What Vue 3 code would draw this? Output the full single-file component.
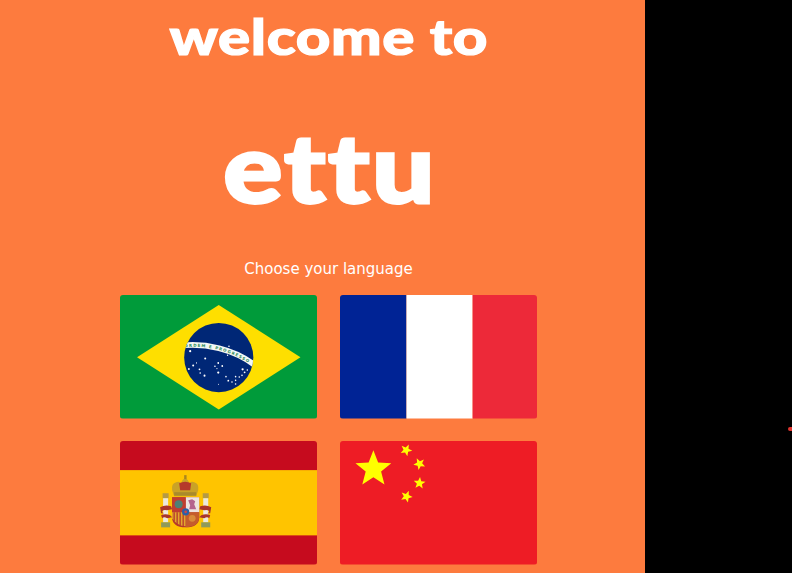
<script setup>
function star(cx, cy, r, rotDeg = 0) {
  const pts = []
  for (let i = 0; i < 10; i++) {
    const rad = i % 2 === 0 ? r : r * 0.43
    const a = ((rotDeg - 90 + i * 36) * Math.PI) / 180
    pts.push(`${(cx + rad * Math.cos(a)).toFixed(2)},${(cy + rad * Math.sin(a)).toFixed(2)}`)
  }
  return pts.join(' ')
}
const brStars = [
  [70,56,1.1],[85,63.3,1],[73,70.3,1],[68.7,73.7,.9],[79.3,74,.9],[80,77.7,.8],[84.3,80.3,1],[76.3,67.7,.6],
  [98,67.7,.9],[94.7,71,.8],[102,70.7,.9],[98,77.3,1.1],[96.7,73.3,.6],[108.7,51,.8],[107.3,60,.7],[105.7,81.3,.8],
  [108,85.3,.9],[111.7,86.7,.8],[115.3,81.3,.8],[115.3,85,.8],[115.3,88.7,.8],[119,81.7,.8],[121.7,80,.8],
  [122.3,74,1.1],[127,74.7,.8],[124.3,77,.9],[98.3,89,.5]
]
const cnBig = star(33.3, 28, 18.8)
const cnSmall = [
  star(66, 9, 6.2, 25),
  star(79.3, 22.7, 6.2, 45),
  star(79.3, 42, 6.2, 5),
  star(66.3, 55.3, 6.2, 22)
]
</script>

<template>
  <div class="screen">
    <main class="panel">
      <h1 class="welcome">welcome to</h1>
      <div class="logo">ettu</div>
      <p class="choose">Choose your language</p>
      <div class="flags">
        <svg class="flag" viewBox="0 0 197 123" preserveAspectRatio="none" aria-label="Português">
          <defs>
            <clipPath id="globe"><circle cx="98.5" cy="62.3" r="34.5" /></clipPath>
          </defs>
          <rect width="197" height="123" fill="#009B3A" />
          <polygon points="17,62 98.5,10 180,62 98.5,114" fill="#FEDF00" />
          <circle cx="98.5" cy="62.3" r="34.5" fill="#002776" />
          <g clip-path="url(#globe)">
            <path d="M60 50.5 C 84 47.5, 114 53.5, 136 71" fill="none" stroke="#f4f8f4" stroke-width="5.6" />
            <path id="motto" d="M64.5 52.2 C 84 49.6, 113 55.4, 133 71.2" fill="none" />
            <text class="motto"><textPath href="#motto" startOffset="0">ORDEM E PROGRESSO</textPath></text>
          </g>
          <circle v-for="(s, i) in brStars" :key="i" :cx="s[0]" :cy="s[1]" :r="s[2]" fill="#fff" />
        </svg>

        <svg class="flag" viewBox="0 0 197 123" preserveAspectRatio="none" aria-label="Français">
          <rect width="66.3" height="123" fill="#002395" />
          <rect x="66.3" width="66" height="123" fill="#fff" />
          <rect x="132.3" width="64.7" height="123" fill="#ED2939" />
        </svg>

        <svg class="flag" viewBox="0 0 197 123" preserveAspectRatio="none" aria-label="Español">
          <rect width="197" height="123" fill="#C60B1E" />
          <rect y="29" width="197" height="65" fill="#FFC400" />
          <!-- pillars -->
          <g>
            <rect x="42.5" y="52" width="6" height="5" fill="#B59A45" />
            <rect x="43" y="57" width="5" height="24" fill="#EDE9DC" />
            <rect x="41" y="81" width="9" height="5" fill="#8F9A5B" />
            <rect x="82.5" y="52" width="6" height="5" fill="#B59A45" />
            <rect x="83" y="57" width="5" height="24" fill="#EDE9DC" />
            <rect x="81" y="81" width="9" height="5" fill="#8F9A5B" />
            <path d="M40 66 q5 -3 11 -1 l1 3 -5 1 q-5 -1 -5 2 l2 1 -3 0z M41 74 q4 -2 9 0 l2 2 -5 1 q-3 -2 -5 0z" fill="#A9352A" />
            <path d="M91 66 q-5 -3 -11 -1 l-1 3 5 1 q5 -1 5 2 l-2 1 3 0z M90 74 q-4 -2 -9 0 l-2 2 5 1 q3 -2 5 0z" fill="#A9352A" />
          </g>
          <!-- crown -->
          <path d="M52 49 q-1 -7 4 -8 q3 -1 5 1 q1 -4 4 -5 q3 1 4 5 q2 -2 5 -1 q5 1 4 8 l-2 6 h-22z" fill="#C9A227" />
          <path d="M59 42 q6 -3 12 0 l-1 7 h-10z" fill="#B5392B" />
          <rect x="64" y="34" width="2.4" height="4" fill="#A9861F" />
          <rect x="54" y="51" width="22" height="3.4" fill="#A98A2A" />
          <!-- shield -->
          <path d="M52 56 h27 v20 q0 10 -13.5 10 q-13.5 0 -13.5 -10z" fill="#B5392B" />
          <rect x="65.5" y="56" width="13.5" height="15" fill="#EDE3E0" />
          <path d="M68 59 l4 -1 3 2 -1 3 2 5 h-7 l1 -4z" fill="#B4638E" />
          <rect x="52" y="56" width="13.5" height="15" fill="#C03D30" />
          <circle cx="58.5" cy="63" r="4" fill="#4D7F74" />
          <path d="M52 71 h13.5 v14 q-8 0 -13.5 -8z" fill="#E3A72F" />
          <path d="M54 71 v9 M57 71 v12 M60 71 v13 M63 71 v14" stroke="#B5392B" stroke-width="1.3" />
          <path d="M65.5 71 H79 v5 q0 9 -13.5 10z" fill="#C55D2C" />
          <circle cx="72" cy="77" r="3.4" fill="#D98B3A" />
          <circle cx="65.5" cy="70.5" r="3.6" fill="#2B5FA8" />
          <circle cx="65.5" cy="70.5" r="1.4" fill="#C9464A" />
        </svg>

        <svg class="flag" viewBox="0 0 197 123" preserveAspectRatio="none" aria-label="中文">
          <rect width="197" height="123" fill="#EE1C25" />
          <polygon :points="cnBig" fill="#FFFF00" />
          <polygon v-for="(p, i) in cnSmall" :key="i" :points="p" fill="#FFFF00" />
        </svg>
      </div>
    </main>
    <span class="edge-dot"></span>
  </div>
</template>

<style scoped>
.screen {
  position: relative;
  width: 792px;
  height: 573px;
  background: #000;
  overflow: hidden;
}
.panel {
  box-sizing: border-box;
  width: 645px;
  height: 573px;
  padding-left: 12px;
  background: #fd7b3e;
  display: flex;
  flex-direction: column;
  align-items: center;
  color: #fff;
}
.welcome {
  margin: 0;
  font-family: "Lato", sans-serif;
  font-weight: 900;
  font-size: 50px;
  line-height: 72px;
  letter-spacing: 0.5px;
  -webkit-text-stroke: 1.2px #fff;
  transform: scaleX(1.2);
}
.logo {
  margin-top: 38px;
  padding-left: 2px;
  font-family: "Lato", sans-serif;
  font-weight: 900;
  font-size: 96px;
  line-height: 112px;
  letter-spacing: 2px;
  -webkit-text-stroke: 2.8px #fff;
  transform: scaleX(1.15);
}
.choose {
  margin: 37px 0 0;
  font-family: "DejaVu Sans", sans-serif;
  font-size: 15px;
  line-height: 20px;
}
.flags {
  margin-top: 16px;
  display: grid;
  grid-template-columns: 197.5px 197.5px;
  grid-auto-rows: 123.5px;
  column-gap: 22.5px;
  row-gap: 22.5px;
}
.flag {
  display: block;
  width: 100%;
  height: 100%;
  border-radius: 3px;
}
.motto {
  font-family: "DejaVu Sans", sans-serif;
  font-size: 4px;
  font-weight: 700;
  letter-spacing: 1.05px;
  fill: #2a8a5a;
}
.edge-dot {
  position: absolute;
  left: 788px;
  top: 427px;
  width: 5px;
  height: 4px;
  border-radius: 2px 0 0 2px;
  background: #e0352f;
}
</style>
